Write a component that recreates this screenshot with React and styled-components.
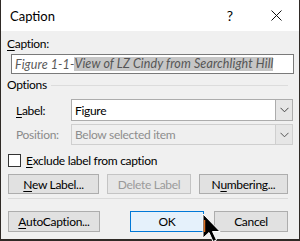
import React from "react";
import styled, { createGlobalStyle } from "styled-components";

const Global = createGlobalStyle`
  html, body { margin: 0; padding: 0; background: #2f2a26; }
  body { width: 300px; height: 241px; overflow: hidden; }
  * { box-sizing: border-box; }
`;

const font = `Lato, "Noto Sans", sans-serif`;

const Frame = styled.div`
  position: relative;
  width: 298px;
  height: 239px;
  margin-left: 1px;
  background: #f0f0f0;
  font-family: ${font};
  font-size: 12px;
  letter-spacing: -0.3px;
  color: #000;
  display: flex;
  flex-direction: column;
`;

const TitleBar = styled.div`
  height: 31px;
  background: #fff;
  display: flex;
  align-items: center;
  padding-left: 9px;
  font-size: 13px;
  letter-spacing: 0;
  flex: none;
`;

const Title = styled.div`
  flex: 1;
`;

const TitleButton = styled.div`
  width: ${(p) => p.w}px;
  display: flex;
  justify-content: center;
  align-items: center;
  font-size: 14px;
`;

const Body = styled.div`
  padding: 0 6px 0 6px;
  display: flex;
  flex-direction: column;
`;

const FieldLabel = styled.div`
  margin-top: 6px;
  height: 14px;
  line-height: 14px;
`;

const U = styled.span`
  text-decoration: underline;
  text-underline-offset: 2px;
`;

const TextInput = styled.div`
  margin: 3px 0 0 4px;
  height: 20px;
  width: 283px;
  background: #fff;
  border: 1px solid #7a7a7a;
  display: flex;
  align-items: center;
  padding-left: 3px;
  font-size: 12.5px;
  letter-spacing: 0.1px;
  font-style: italic;
  color: #5a5a5a;
  white-space: nowrap;
  overflow: hidden;
`;

const Selected = styled.span`
  background: #c6c6c6;
  color: #555;
  line-height: 14px;
`;

const GroupHeader = styled.div`
  margin-top: 4px;
  display: flex;
  align-items: center;
  gap: 4px;
  height: 14px;
  line-height: 14px;
`;

const GroupLine = styled.div`
  flex: 1;
  height: 1px;
  background: #dcdcdc;
  margin-right: 5px;
`;

const Row = styled.div`
  display: flex;
  align-items: center;
  margin-top: ${(p) => p.mt}px;
  padding-left: 9px;
`;

const RowLabel = styled.div`
  width: 55px;
  color: ${(p) => (p.disabled ? "#8a8a8a" : "#000")};
`;

const Combo = styled.div`
  width: 222px;
  height: ${(p) => p.h}px;
  display: flex;
  background: ${(p) => (p.disabled ? "#efefef" : "#fff")};
  border: 1px solid ${(p) => (p.disabled ? "#cfcfcf" : "#acacac")};
`;

const ComboText = styled.div`
  flex: 1;
  display: flex;
  align-items: center;
  padding-left: 3px;
  color: ${(p) => (p.disabled ? "#8d8d8d" : "#000")};
`;

const ComboButton = styled.div`
  width: 17px;
  display: flex;
  align-items: center;
  justify-content: center;
  background: #e6e6e6;
  border-left: 1px solid ${(p) => (p.disabled ? "#cfcfcf" : "#acacac")};
`;

const CheckRow = styled.label`
  display: flex;
  align-items: center;
  gap: 5px;
  margin-top: 9px;
  padding-left: 1px;
  height: 13px;
`;

const Box = styled.span`
  width: 13px;
  height: 13px;
  border: 1px solid #333;
  background: #fff;
`;

const ButtonRow = styled.div`
  display: flex;
  justify-content: ${(p) => p.justify || "space-between"};
  margin-top: ${(p) => p.mt}px;
  padding-left: 1px;
  padding-right: 5px;
`;

const Button = styled.div`
  width: ${(p) => p.w}px;
  height: ${(p) => p.h || 21}px;
  margin-left: ${(p) => p.ml || 0}px;
  display: flex;
  align-items: center;
  justify-content: center;
  background: ${(p) => (p.primary ? "#e5f1fb" : p.disabled ? "#e6e6e6" : "#e1e1e1")};
  border: 1px solid ${(p) => (p.primary ? "#0078d7" : p.disabled ? "#c4c4c4" : "#adadad")};
  color: ${(p) => (p.disabled ? "#9a9a9a" : "#000")};
`;

const Separator = styled.div`
  margin: 4px 5px 0 1px;
  height: 1px;
  background: #dadada;
`;

const Spacer = styled.div`
  flex: 1;
`;

const Cursor = styled.svg`
  position: absolute;
  left: 201px;
  top: 213px;
`;

const Chevron = ({ color }) => (
  <svg width="9" height="6" viewBox="0 0 9 6">
    <path d="M0.5 0.8 L4.5 4.8 L8.5 0.8" fill="none" stroke={color} strokeWidth="1" />
  </svg>
);

export default function App() {
  return (
    <>
      <Global />
      <Frame>
        <TitleBar>
          <Title>Caption</Title>
          <TitleButton w={46}>?</TitleButton>
          <TitleButton w={46}>
            <svg width="11" height="11" viewBox="0 0 11 11">
              <path d="M0.5 0.5 L10.5 10.5 M10.5 0.5 L0.5 10.5" stroke="#111" strokeWidth="1" />
            </svg>
          </TitleButton>
        </TitleBar>
        <Body>
          <FieldLabel>
            <U>C</U>aption:
          </FieldLabel>
          <TextInput>
            Figure 1-1-<Selected> View of LZ Cindy from Searchlight Hill</Selected>
          </TextInput>
          <GroupHeader>
            Options
            <GroupLine />
          </GroupHeader>
          <Row mt={7}>
            <RowLabel>
              <U>L</U>abel:
            </RowLabel>
            <Combo h={22}>
              <ComboText>Figure</ComboText>
              <ComboButton>
                <Chevron color="#444" />
              </ComboButton>
            </Combo>
          </Row>
          <Row mt={3}>
            <RowLabel disabled>Position:</RowLabel>
            <Combo h={21} disabled>
              <ComboText disabled>Below selected item</ComboText>
              <ComboButton disabled>
                <Chevron color="#555" />
              </ComboButton>
            </Combo>
          </Row>
          <CheckRow>
            <Box />
            <span>
              <U>E</U>xclude label from caption
            </span>
          </CheckRow>
          <ButtonRow mt={7}>
            <Button w={91} h={20}>
              <span>
                <U>N</U>ew Label...
              </span>
            </Button>
            <Button w={84} h={20} disabled>
              Delete Label
            </Button>
            <Button w={89} h={20}>
              <span>
                N<U>u</U>mbering...
              </span>
            </Button>
          </ButtonRow>
          <Separator />
          <ButtonRow mt={12} justify="flex-start">
            <Button w={92}>
              <span>
                <U>A</U>utoCaption...
              </span>
            </Button>
            <Spacer />
            <Button w={74} primary>
              OK
            </Button>
            <Button w={74} ml={10}>
              Cancel
            </Button>
          </ButtonRow>
        </Body>
        <Cursor width="22" height="30" viewBox="0 0 22 30">
          <path
            d="M1 1 L1 25 L7 19.5 L11 28.5 L14.5 27 L10.5 18.5 L18 18.5 Z"
            fill="#000"
            stroke="#fff"
            strokeWidth="1"
            strokeLinejoin="round"
          />
          <path d="M2.5 7 L2.5 19" stroke="#e07020" strokeWidth="1.5" />
        </Cursor>
      </Frame>
    </>
  );
}
